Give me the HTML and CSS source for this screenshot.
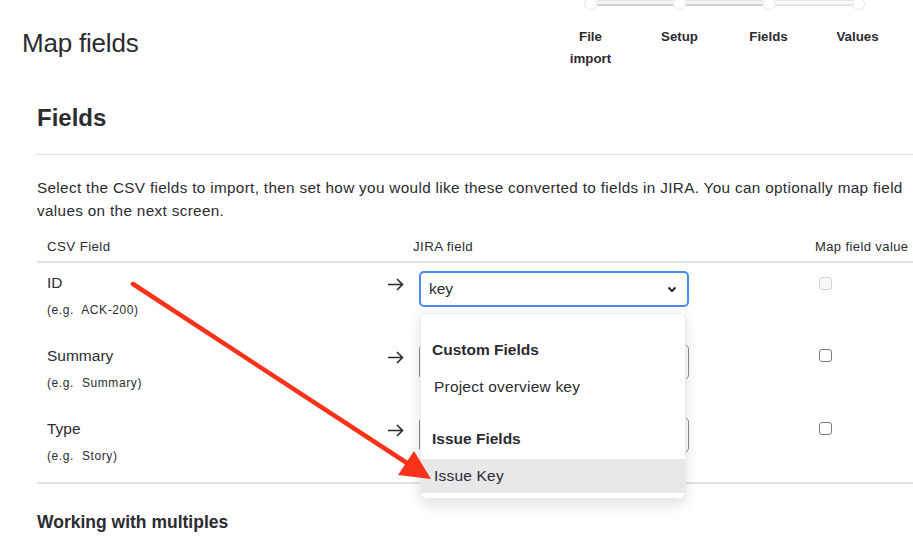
FILE: index.html
```html
<!DOCTYPE html>
<html>
<head>
<meta charset="utf-8">
<link rel="stylesheet" href="styles.css">
</head>
<body>
<div class="page">
  <header class="top">
    <h1 class="title">Map fields</h1>
    <div class="steps">
      <div class="track">
        <span class="node"></span><span class="bar"></span>
        <span class="node"></span><span class="bar"></span>
        <span class="node"></span><span class="bar light"></span>
        <span class="node"></span>
      </div>
      <div class="labels">
        <div class="label">File<br>import</div>
        <div class="label">Setup</div>
        <div class="label">Fields</div>
        <div class="label">Values</div>
      </div>
    </div>
  </header>

  <main class="content">
    <h2 class="heading">Fields</h2>
    <hr class="rule">
    <p class="intro">Select the CSV fields to import, then set how you would like these converted to fields in JIRA. You can optionally map field<br>values on the next screen.</p>

    <div class="table">
      <div class="row head">
        <div class="c-csv">CSV Field</div>
        <div class="c-arrow"></div>
        <div class="c-jira">JIRA field</div>
        <div class="c-map">Map field value</div>
      </div>

      <div class="row">
        <div class="c-csv">
          <div class="fname">ID</div>
          <div class="example">(e.g.&nbsp; ACK-200)</div>
        </div>
        <div class="c-arrow"><svg class="arr" width="17" height="13" viewBox="0 0 17 13"><path d="M1 6.5H15.5M10 1L15.5 6.5L10 12" fill="none" stroke="#2b2b30" stroke-width="1.6"/></svg></div>
        <div class="c-jira anchor">
          <div class="select focus"><span>key</span><svg width="10" height="7" viewBox="0 0 10 7"><path d="M1.5 1.5L5 5L8.5 1.5" fill="none" stroke="#222" stroke-width="2"/></svg></div>
          <div class="menu">
            <div class="group">Custom Fields</div>
            <div class="item">Project overview key</div>
            <div class="group second">Issue Fields</div>
            <div class="item active">Issue Key</div>
          </div>
        </div>
        <div class="c-map"><span class="check disabled"></span></div>
      </div>

      <div class="row">
        <div class="c-csv">
          <div class="fname">Summary</div>
          <div class="example">(e.g.&nbsp; Summary)</div>
        </div>
        <div class="c-arrow"><svg class="arr" width="17" height="13" viewBox="0 0 17 13"><path d="M1 6.5H15.5M10 1L15.5 6.5L10 12" fill="none" stroke="#2b2b30" stroke-width="1.6"/></svg></div>
        <div class="c-jira"><div class="select"></div></div>
        <div class="c-map"><span class="check"></span></div>
      </div>

      <div class="row last">
        <div class="c-csv">
          <div class="fname">Type</div>
          <div class="example">(e.g.&nbsp; Story)</div>
        </div>
        <div class="c-arrow"><svg class="arr" width="17" height="13" viewBox="0 0 17 13"><path d="M1 6.5H15.5M10 1L15.5 6.5L10 12" fill="none" stroke="#2b2b30" stroke-width="1.6"/></svg></div>
        <div class="c-jira"><div class="select"></div></div>
        <div class="c-map"><span class="check"></span></div>
      </div>
    </div>

    <h3 class="sub">Working with multiples</h3>
  </main>

  <svg class="annot" width="913" height="543" viewBox="0 0 913 543">
    <line x1="133" y1="284" x2="410" y2="465" stroke="#fa3219" stroke-width="4.5" stroke-linecap="round"/>
    <polygon points="431,479 398,475 414,451" fill="#fa3219"/>
  </svg>
</div>
</body>
</html>
```

FILE: styles.css
```css
* { box-sizing: border-box; }
html, body { margin: 0; padding: 0; }
body {
  font-family: "Liberation Sans", Arial, sans-serif;
  color: #2b2b30;
  background: #fff;
  overflow: hidden;
  width: 913px;
  height: 543px;
}
.page { position: relative; width: 913px; height: 543px; overflow: hidden; }

.top { display: flex; align-items: flex-start; height: 80px; }
.title {
  margin: 28px 0 0 22px;
  font-size: 26px;
  line-height: 30px;
  font-weight: 400;
  letter-spacing: -0.2px;
}
.steps { margin-left: auto; margin-right: 11px; width: 356px; }
.track {
  display: flex;
  align-items: center;
  margin: -3px 0 0 38px;
  width: 281px;
}
.node {
  width: 13px; height: 13px; border-radius: 50%;
  background: #fff; border: 1px solid #e6e6e6;
  flex: none;
}
.bar {
  flex: 1;
  height: 7px;
  margin-top: -2px;
  background: #f4f4f4;
  border-top: 2px solid #e2e2e2;
  border-bottom: 2px solid #d2d2d2;
}
.bar.light { background: #fafafa; border-top-color: #e4e4e4; border-bottom-color: #e4e4e4; }
.labels { display: grid; grid-template-columns: repeat(4, 89px); margin-top: 16px; }
.label {
  text-align: center;
  font-size: 13.3px;
  font-weight: 700;
  line-height: 22px;
  color: #2b2b30;
}

.content { padding-left: 37px; }
.heading {
  margin: 24px 0 0;
  font-size: 24px;
  line-height: 28px;
  font-weight: 700;
}
.rule { margin: 22px 0 0; border: 0; border-top: 1px solid #dedede; height: 0; width: 900px; }
.intro {
  margin: 21px 0 0;
  font-size: 15.3px;
  line-height: 23px;
  letter-spacing: 0.33px;
  white-space: nowrap;
}

.table { width: 900px; margin-top: 9px; }
.row {
  display: grid;
  grid-template-columns: 337px 45px 386px 1fr;
  height: 73px;
}
.row.head {
  height: 32px;
  border-bottom: 2px solid #e2e2e2;
  font-size: 13.3px;
  line-height: 16px;
  letter-spacing: 0.4px;
  padding-top: 8px;
}
.row.head > div { padding-top: 0; }
.row.last { border-bottom: 2px solid #e2e2e2; height: 75px; }
.head .c-csv { padding-left: 10px; }
.head .c-jira { margin-left: -6px; }
.head .c-map { padding-left: 10px; }

.c-csv { padding-left: 10px; }
.fname { font-size: 15.5px; line-height: 18px; margin-top: 11px; }
.example { font-size: 12px; line-height: 18px; margin-top: 9px; letter-spacing: 0.6px; }
.c-arrow { padding: 15px 0 0 13px; }
.arr { display: block; }
.c-jira { padding-top: 8px; }
.anchor { position: relative; }
.select {
  width: 270px; height: 36px;
  border: 1px solid #8d8d93;
  border-radius: 5px;
  display: flex; align-items: center; justify-content: space-between;
  padding: 0 10px 0 9px;
  font-size: 15.5px;
  background: #fff;
}
.select.focus { border: 2px solid #4b8af0; padding-left: 8px; }
.c-map { padding: 13px 0 0 14px; font-size: 13px; }
.check {
  display: block; width: 13px; height: 13px;
  border: 1px solid #7a7a7f; border-radius: 3px; background: #fff;
}
.check.disabled { border-color: #d4d4d6; background: #f6f6f6; }
.row:not(.head) .c-map { padding-top: 14px; }
.row:not(.head) + .row .c-map { padding-top: 13px; }

.menu {
  position: absolute;
  left: 1px; top: 50px;
  width: 266px;
  background: #fff;
  border: 1px solid #ececec;
  border-radius: 6px;
  box-shadow: 0 5px 14px rgba(0,0,0,0.13);
  padding: 26px 0 5px;
  font-size: 15.5px;
  letter-spacing: 0.2px;
}
.group { font-weight: 700; line-height: 20px; padding-left: 11px; letter-spacing: 0; }
.group.second { margin-top: 25px; }
.item { line-height: 34px; padding-left: 13px; margin-top: 10px; }
.item.active { background: #e8e8ea; margin-top: 10px; }

.sub {
  margin: 28px 0 0;
  font-size: 17.5px;
  line-height: 20px;
  font-weight: 700;
}

.annot { position: absolute; left: 0; top: 0; pointer-events: none; }
```
